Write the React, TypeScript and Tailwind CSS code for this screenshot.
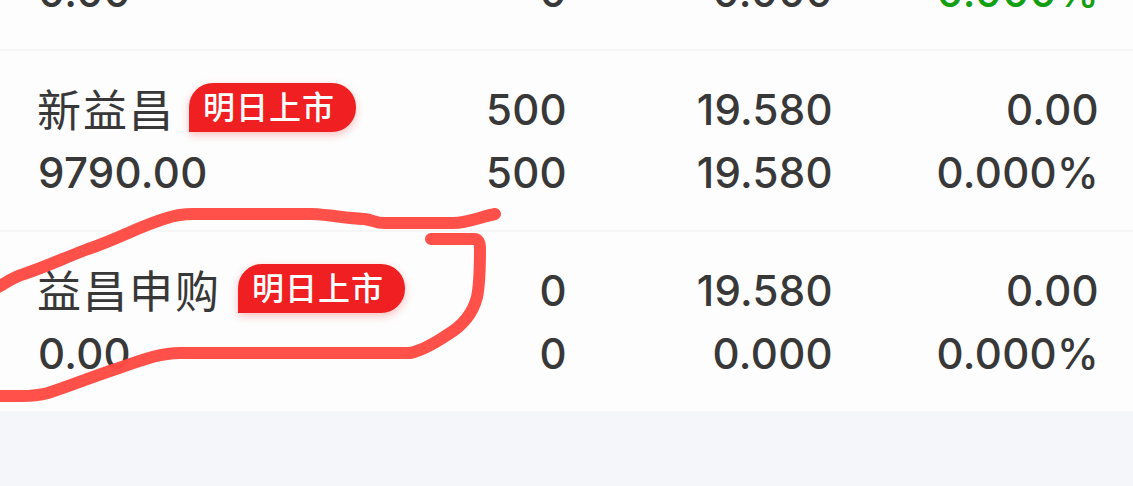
interface Cell {
  text: string;
  down?: boolean;
}

interface Holding {
  name: string;
  nameWidth: string;
  tag?: string;
  value: string;
  top: Cell[];
  bottom: Cell[];
}

const holdings: Holding[] = [
  {
    name: "新益昌",
    nameWidth: "w-[152px]",
    tag: "明日上市",
    value: "9790.00",
    top: [{ text: "500" }, { text: "19.580" }, { text: "0.00" }],
    bottom: [{ text: "500" }, { text: "19.580" }, { text: "0.000%" }],
  },
  {
    name: "益昌申购",
    nameWidth: "w-[201px]",
    tag: "明日上市",
    value: "0.00",
    top: [{ text: "0" }, { text: "19.580" }, { text: "0.00" }],
    bottom: [{ text: "0" }, { text: "0.000" }, { text: "0.000%" }],
  },
];

const scrolledBottom: Cell[] = [{ text: "0" }, { text: "0.000" }, { text: "0.000%", down: true }];

function Tag({ label }: { label: string }) {
  return (
    <span className="mb-[5px] flex h-[49px] w-[167px] items-center rounded-[24px] rounded-bl-none bg-[#f01f22] pt-px pl-[14px] text-[32px] leading-none font-medium tracking-[1px] text-white shadow-[0_3px_9px_rgba(240,31,34,0.28)]">
      {label}
    </span>
  );
}

function Numbers({ cells }: { cells: Cell[] }) {
  return cells.map((c, i) => (
    <span key={i} className={c.down ? "text-right text-[#12a012]" : "text-right"}>
      {c.text}
    </span>
  ));
}

function Line({ left, cells }: { left: React.ReactNode; cells: Cell[] }) {
  const [first, ...rest] = cells;
  return (
    <div className="grid h-[63.5px] shrink-0 grid-cols-[529px_266px_266px] items-center whitespace-nowrap">
      <div className="flex items-center justify-between">
        {left}
        <span>{first.text}</span>
      </div>
      <Numbers cells={rest} />
    </div>
  );
}

// Hand-drawn marker circle over the second holding
function Marker() {
  return (
    <svg
      className="pointer-events-none absolute inset-0"
      width="1133"
      height="486"
      viewBox="0 0 1133 486"
      fill="none"
      stroke="#ff4b43"
      strokeOpacity="0.97"
      strokeWidth="12"
      strokeLinecap="round"
      strokeLinejoin="round"
    >
      <path d="M-8 290 C4 285 10 278 24 274 C48 266 64 258 88 249 C120 238 140 226 167 218 Q179 214 193 214 H312 C332 215 344 218 364 219 C374 220 374 223 385 223 H453 C468 223 480 217 495 214" />
      <path d="M431 239 H474 Q480 239 480 248 C480 268 480 283 477 297 C473 313 464 325 447 335 C432 345 420 351 410 353 H180 C160 353 142 360 119 368 C94 376 70 386 48 393 Q36 396 22 396 H-8" />
    </svg>
  );
}

export default function App() {
  return (
    <div className="relative h-[486px] w-[1133px] overflow-hidden bg-[#f5f6fa] font-[Inter,'Noto_Sans_CJK_SC',sans-serif] text-[42px] leading-none font-medium tracking-[0.3px] text-[#383838]">
      <div className="flex h-[51px] flex-col justify-end overflow-hidden border-b-2 border-[#f6f6f6] bg-[#fdfdfd] pb-[25px] pl-[38px]">
        <Line left={<span>0.00</span>} cells={scrolledBottom} />
      </div>
      {holdings.map((h, i) => (
        <div
          key={h.name}
          className={
            i < holdings.length - 1
              ? "h-[181px] border-b-2 border-[#f6f6f6] bg-[#fdfdfd] pt-[27px] pl-[38px]"
              : "h-[179px] bg-[#fdfdfd] pt-[27px] pl-[38px]"
          }
        >
          <Line
            left={
              <div className="-ml-px flex items-center">
                <span className={`${h.nameWidth} pt-[3px] text-[44px] font-normal tracking-[2px]`}>
                  {h.name}
                </span>
                {h.tag && <Tag label={h.tag} />}
              </div>
            }
            cells={h.top}
          />
          <Line left={<span>{h.value}</span>} cells={h.bottom} />
        </div>
      ))}
      <Marker />
    </div>
  );
}
